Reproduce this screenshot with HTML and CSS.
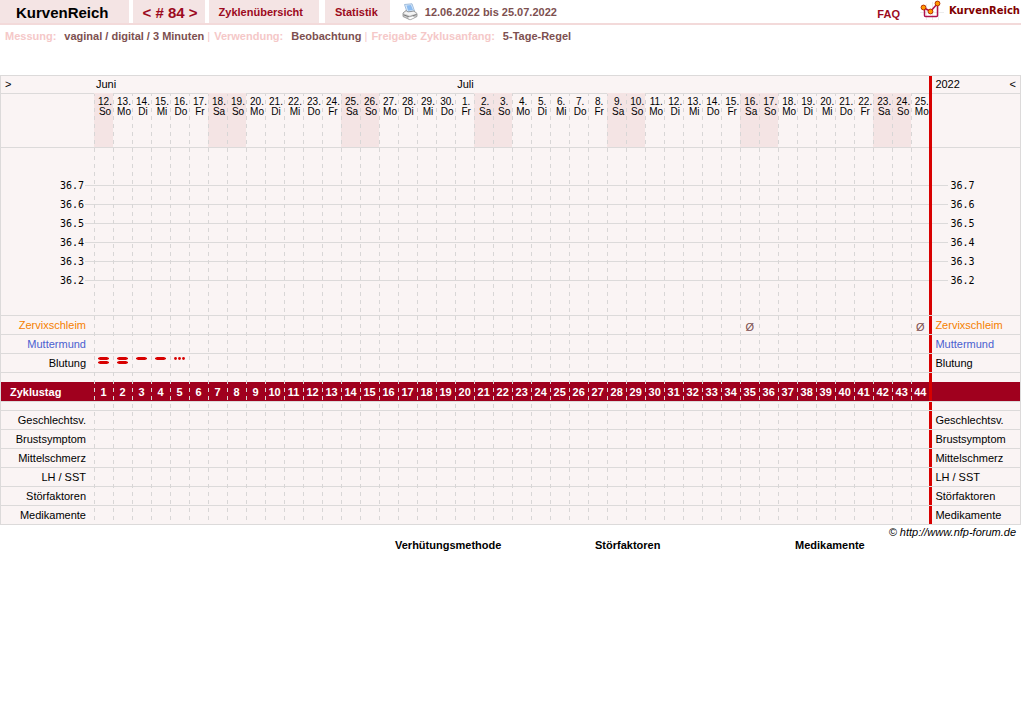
FILE: index.html
```
<!DOCTYPE html>
<html lang="de">
<head>
  <meta charset="UTF-8">
  <title>KurvenReich</title>
  <meta name="viewport" content="width=device-width, initial-scale=1.0">
  <link rel="stylesheet" href="styles.css">
</head>
<body>
  <header class="topbar">
    <h1 class="tab brand">KurvenReich</h1>
    <nav class="tab cycle-nav">
      <a href="#prev">&lt;</a> <span># 84</span> <a href="#next">&gt;</a>
    </nav>
    <a class="tab overview" href="#zyklen">Zyklenübersicht</a>
    <a class="tab stats" href="#statistik">Statistik</a>
    <a class="print" href="#drucken" aria-label="Drucken">
      <svg width="16" height="18" viewBox="0 0 16 18">
        <path d="M2.500 1.500 10 .8 12.500 8 5 9Z" fill="#dcebf9" stroke="#8fb0d4" stroke-width=".8"/>
        <path d="M4.500 2.500 9 2 11 7 6 7.800Z" fill="#8dbcf0"/>
        <path d="M1 10 4 7.500 6 9 12 8 15 10.500V13.500L8 16.800 1 13.500Z" fill="#cfcfcf" stroke="#8c8c8c" stroke-width=".8"/>
        <path d="M1.500 10.200 4.500 8.500 6 9.500 11.500 8.800 14.500 10.500 7.500 12.500Z" fill="#f4f4f4"/>
        <path d="M1.500 11.800 7.500 14 14.500 11.500" fill="none" stroke="#777" stroke-width="1"/>
        <path d="M5 14.500 11 13 13 14.500 8 16.800Z" fill="#fff" stroke="#aaa" stroke-width=".6"/>
      </svg>
    </a>
    <span class="range">12.06.2022 bis 25.07.2022</span>
    <a class="faq" href="#faq">FAQ</a>
    <a class="logo" href="#start">
      <svg width="24" height="20" viewBox="0 0 24 20">
        <path d="M0 12.500H24M6.500 4V20M12.500 2V20M18.500 4V20" stroke="#ececec" fill="none"/>
        <path d="M4.500 7.500V15.500Q4.500 16.500 5.500 16.500H16.500Q17.500 16.500 17.500 15.500V4M3.500 7.500 10.500 11.500 17.500 3.500" fill="none" stroke="#b0104c" stroke-width="1.5"/>
        <circle cx="3.500" cy="7.500" r="2.400" fill="#ff9a00" stroke="#b83000"/>
        <circle cx="10.500" cy="11.500" r="2.400" fill="#ff9a00" stroke="#b83000"/>
        <circle cx="17.500" cy="3.500" r="2.400" fill="#ff9a00" stroke="#b83000"/>
      </svg>
      <span>KurvenReich</span>
    </a>
  </header>

  <dl class="info">
    <div><dt>Messung:</dt><dd>vaginal / digital / 3 Minuten</dd></div>
    <div><dt>Verwendung:</dt><dd>Beobachtung</dd></div>
    <div><dt>Freigabe Zyklusanfang:</dt><dd>5-Tage-Regel</dd></div>
  </dl>

  <main>
    <div class="chart">
      <table>
        <colgroup>
          <col class="col-label">
          <col class="col-day" span="43">
          <col class="col-last">
          <col>
        </colgroup>
        <thead>
          <tr class="months">
            <th><a href="#zurueck">&gt;</a></th>
            <th colspan="19">Juni</th>
            <th colspan="25">Juli</th>
            <th class="end"><span>2022</span><a href="#vor">&lt;</a></th>
          </tr>
          <tr class="days" id="days"></tr>
        </thead>
        <tbody id="rows"></tbody>
      </table>
    </div>
    <p class="copyright">© http://www.nfp-forum.de</p>
    <div class="legend">
      <h2>Verhütungsmethode</h2>
      <h2>Störfaktoren</h2>
      <h2>Medikamente</h2>
    </div>
  </main>
  <script src="chart.js"></script>
</body>
</html>
```
FILE: styles.css
```
body {
  margin: 0;
  background: #fff;
  color: #000;
  font-family: "Liberation Sans", Arial, sans-serif;
  font-size: 11px;
}

a {
  color: inherit;
  text-decoration: none;
}

/* top bar */
.topbar {
  display: flex;
  align-items: stretch;
  height: 23px;
  border-bottom: 2px solid #f3dada;
  color: #9c0a20;
  font-weight: bold;
  line-height: 25px;
}
.tab {
  background: #f4e4e4;
  padding: 0 10px;
  margin: 0 4px 0 0;
}
.brand {
  color: #000;
  font-size: 15px;
  padding: 0 20px 0 16px;
}
.cycle-nav {
  font-size: 15px;
  padding: 0 7px 0 10px;
}
.overview {
  padding-right: 16px;
  margin-right: 6px;
}
.stats {
  padding-right: 12px;
  margin-right: 12px;
}
.print {
  padding-top: 3px;
  margin-right: 7px;
}
.print svg,
.logo svg {
  display: block;
}
.range {
  color: #7d5050;
}
.faq {
  margin-left: auto;
  margin-right: 20px;
  line-height: 28px;
}
.logo {
  display: flex;
  gap: 5px;
  margin-right: 1px;
  color: #800000;
  font-family: "DejaVu Sans", sans-serif;
  font-size: 10px;
  line-height: 22px;
}

/* info line */
.info {
  display: flex;
  margin: 0 0 32px 5px;
  padding-top: 2px;
  height: 16px;
  font-weight: bold;
  line-height: 18px;
}
.info div {
  display: flex;
}
.info div + div::before {
  content: "|";
  color: #f5c8c8;
  font-weight: normal;
  margin: 0 4px 0 3px;
}
.info dt {
  color: #f5c8c8;
}
.info dd {
  color: #7d5050;
  margin: 0 0 0 8px;
}

/* cycle chart */
.chart {
  position: relative;
}
/* dashed lines between the days */
.chart::after {
  content: "";
  position: absolute;
  left: 94px;
  top: 19px;
  bottom: 4px;
  width: 835px;
  background: conic-gradient(from 270deg at 1px 4px, #d8d6d6 90deg, transparent 0) 0 6px / 19px 8px;
  pointer-events: none;
}
.chart table {
  width: 100%;
  table-layout: fixed;
  border-collapse: separate;
  border-spacing: 0;
  border: 1px solid #dcdada;
  border-top: 0;
  background: #faf4f4;
  line-height: 18px;
}
.col-label {
  width: 93px;
}
.col-day {
  width: 19px;
}
.col-last {
  width: 18px;
}
.chart th,
.chart td {
  box-sizing: border-box;
  height: 19px;
  padding: 0;
  border-top: 1px solid #dcdada;
  font-weight: normal;
  text-align: center;
  white-space: nowrap;
}
.chart .end {
  box-shadow: inset 3px 0 #d80000;
  padding-left: 6px;
  text-align: left;
}
.chart .label {
  padding-right: 8px;
  text-align: right;
}

.chart .months th {
  height: 18px;
  padding-left: 2px;
  line-height: 17px;
  text-align: left;
}
.chart .months th:first-child {
  padding-left: 4px;
}
.chart .months .end {
  padding-left: 6px;
}
.months .end a {
  float: right;
  margin-right: 4px;
}

.chart .days th {
  height: 54px;
  padding-top: 3px;
  padding-left: 3px;
  font-size: 10px;
  line-height: 10px;
  vertical-align: top;
}
.chart .days .weekend {
  background: #f4e4e4;
  border-top-color: #f4e4e4;
}

.chart .above td {
  height: 29px;
}
.chart .below td {
  height: 25px;
  border-top: 0;
}
.chart .temp th,
.chart .temp td {
  border-top: 0;
  background: linear-gradient(#dcdada, #dcdada) no-repeat right 9px / 100% 1px;
  font-family: "DejaVu Sans Mono", monospace;
  font-size: 10px;
}
.chart .temp .label {
  padding-right: 10px;
  background-size: 9px 1px;
}
.chart .temp .end {
  padding-left: 21px;
  background-position: left 9px;
  background-size: 19px 1px;
}
.chart .above .end,
.chart .temp .end,
.chart .days .end {
  position: relative;
}
/* the year line runs unbroken through the upper part */
.chart .above .end::before,
.chart .temp .end::before,
.chart .days .end::before {
  content: "";
  position: absolute;
  left: 0;
  top: -1px;
  width: 3px;
  height: 20px;
  background: #d80000;
}

.chart .mucus {
  color: #f58000;
}
.chart .cervix {
  color: #4a5fd0;
}
.chart .note {
  color: #7d5050;
  line-height: 14px;
  vertical-align: bottom;
}
.chart .bleed {
  vertical-align: top;
}
.bleed svg {
  display: block;
  margin: 3px auto 0;
}
.chart .gap td {
  height: 10px;
}
.chart .gap-low td {
  height: 9px;
}
.chart .cycle-day th,
.chart .cycle-day td {
  border-top: 0;
  background: #a0001e;
  color: #fff;
  font-weight: bold;
}
.chart .cycle-day .label {
  padding-left: 9px;
  text-align: left;
}

/* below the chart */
.copyright {
  margin: 0 5px 0 0;
  font-style: italic;
  line-height: 14px;
  text-align: right;
}
.legend {
  display: grid;
  grid-template-columns: repeat(3, 200px);
  margin-left: 395px;
}
.legend h2 {
  margin: 0;
  font-size: 11px;
  line-height: 13px;
}
```
FILE: chart.js
```
const DAYS = 44;
const names = ['So', 'Mo', 'Di', 'Mi', 'Do', 'Fr', 'Sa'];
const body = document.getElementById('rows');

// 12 June 2022 is a Sunday
let head = '<th></th>';
for (let i = 0; i < DAYS; i++) {
  const date = i < 19 ? i + 12 : i - 18;
  const day = i % 7;
  const cls = day === 0 || day === 6 ? ' class="weekend"' : '';
  head += `<th${cls}>${date}.<br>${names[day]}</th>`;
}
document.getElementById('days').innerHTML = head + '<th class="end"></th>';

function addRow(cls, label, cells = {}, endLabel = label, labelCls = '') {
  let html = `<th class="label ${labelCls}">${label}</th>`;
  for (let i = 1; i <= DAYS; i++) {
    html += cells[i] || '<td></td>';
  }
  html += `<td class="end ${labelCls}">${endLabel}</td>`;
  body.insertAdjacentHTML('beforeend', `<tr class="${cls}">${html}</tr>`);
}

function addGap(cls) {
  body.insertAdjacentHTML('beforeend',
    `<tr class="${cls}"><td></td><td colspan="${DAYS}"></td><td class="end"></td></tr>`);
}

// bleeding marks
function bleed(shapes) {
  return `<td class="bleed"><svg width="11" height="8" viewBox="0 0 11 8" fill="#d80000">${shapes}</svg></td>`;
}
const bar = y => `<path d="M2 ${y}H9L11 ${y + 1}V${y + 2}L9 ${y + 3}H2L0 ${y + 2}V${y + 1}Z"/>`;
const light = bleed(bar(0));
const strong = bleed(bar(0) + bar(4));
const spots = bleed('<circle cx="1.5" cy="1.5" r="1.4"/><circle cx="5.5" cy="1.5" r="1.4"/><circle cx="9.5" cy="1.5" r="1.4"/>');

addGap('above');
['36.7', '36.6', '36.5', '36.4', '36.3', '36.2'].forEach(t => addRow('temp', t));
addGap('above below');

const none = '<td class="note">Ø</td>';
addRow('', 'Zervixschleim', { 35: none, 44: none }, 'Zervixschleim', 'mucus');
addRow('', 'Muttermund', {}, 'Muttermund', 'cervix');
addRow('', 'Blutung', { 1: strong, 2: strong, 3: light, 4: light, 5: spots });
addGap('gap');

const numbers = {};
for (let i = 1; i <= DAYS; i++) numbers[i] = `<td>${i}</td>`;
addRow('cycle-day', 'Zyklustag', numbers, '');
addGap('gap-low');

['Geschlechtsv.', 'Brustsymptom', 'Mittelschmerz', 'LH / SST', 'Störfaktoren', 'Medikamente']
  .forEach(name => addRow('', name));
```
